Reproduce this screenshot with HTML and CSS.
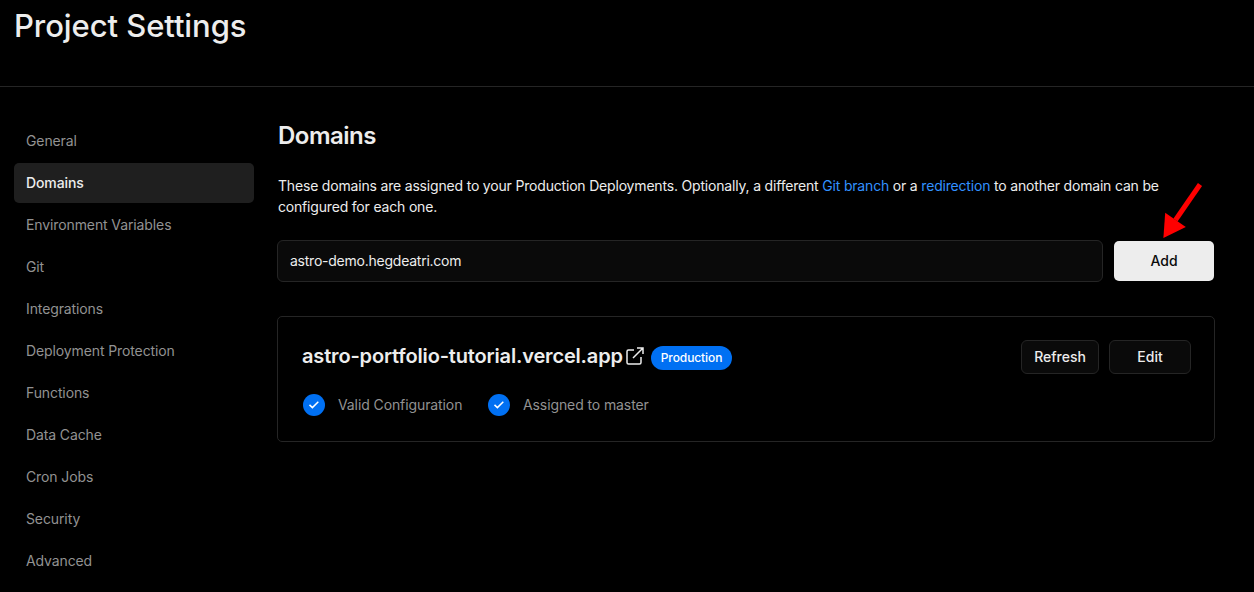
FILE: index.html
```html
<!DOCTYPE html>
<html lang="en">
<head>
<meta charset="utf-8">
<title>Project Settings</title>
<link rel="stylesheet" href="styles.css">
</head>
<body>
<header class="page-header"><h1 class="page-title">Project Settings</h1></header>
<div class="layout">
  <nav class="sidebar">
    <a class="nav-item">General</a>
    <a class="nav-item active">Domains</a>
    <a class="nav-item">Environment Variables</a>
    <a class="nav-item">Git</a>
    <a class="nav-item">Integrations</a>
    <a class="nav-item">Deployment Protection</a>
    <a class="nav-item">Functions</a>
    <a class="nav-item">Data Cache</a>
    <a class="nav-item">Cron Jobs</a>
    <a class="nav-item">Security</a>
    <a class="nav-item">Advanced</a>
  </nav>
  <main class="content">
    <h2 class="section-title">Domains</h2>
    <p class="description">These domains are assigned to your Production Deployments. Optionally, a different <a class="link">Git branch</a> or a <a class="link">redirection</a> to another domain can be<br>configured for each one.</p>
    <div class="add-row">
      <input class="domain-input" type="text" value="astro-demo.hegdeatri.com" aria-label="Domain">
      <button class="btn-add">Add
        <svg class="pointer-arrow" width="44" height="60" viewBox="0 0 44 60"><path d="M40 4.500 15.500 40" stroke="#f00" stroke-width="5" fill="none"/><path d="M3.400 58 5.200 32.800 25.800 47Z" fill="#f00"/></svg>
      </button>
    </div>
    <section class="card">
      <div class="card-top">
        <div class="domain">
          <span class="domain-name">astro-portfolio-tutorial.vercel.app</span>
          <svg class="external" width="18" height="18" viewBox="0 0 18 18" fill="none" stroke="#ededed" stroke-width="1.5"><path d="M8 3H2.500Q1 3 1 4.500V15.500Q1 17 2.500 17H13.500Q15 17 15 15.500V10M11 1H17V7M17 1 7 11"/></svg>
          <span class="badge">Production</span>
        </div>
        <div class="actions"><button class="btn btn-refresh">Refresh</button><button class="btn btn-edit">Edit</button></div>
      </div>
      <div class="statuses">
        <span class="status"><svg width="22" height="22" viewBox="0 0 22 22"><circle cx="11" cy="11" r="11" fill="#0070f3"/><path d="m6.500 10.900 2.900 2.700 5.900-5.800" fill="none" stroke="#fff" stroke-width="1.5"/></svg><span class="status-text valid">Valid Configuration</span></span>
        <span class="status"><svg width="22" height="22" viewBox="0 0 22 22"><circle cx="11" cy="11" r="11" fill="#0070f3"/><path d="m6.500 10.900 2.900 2.700 5.900-5.800" fill="none" stroke="#fff" stroke-width="1.5"/></svg><span class="status-text">Assigned to master</span></span>
      </div>
    </section>
  </main>
</div>
</body>
</html>
```
FILE: styles.css
```css
* { box-sizing: border-box; }
body { margin: 0; height: 592px; overflow: hidden; background: #000; color: #ededed; font: 14px/20px Inter, "Liberation Sans", sans-serif; }
h1, h2, p { margin: 0; }
button, input { font: inherit; }
.page-header { height: 87px; padding: 6px 14px; border-bottom: 1px solid #252525; }
.page-title { font-size: 31px; line-height: 40px; font-weight: 500; letter-spacing: -0.07px; white-space: nowrap; }
.layout { display: flex; gap: 23px; padding: 34px 39px 0 14px; }
.sidebar { width: 240px; flex: none; display: flex; flex-direction: column; gap: 2px; }
.nav-item { height: 40px; padding: 10px 12px; border-radius: 5px; color: #929292; letter-spacing: -0.11px; }
.nav-item.active { background: #1f1f1f; color: #ededed; font-weight: 500; }
.content { flex: 1; }
.section-title { padding: 0 1px; font-size: 24px; line-height: 30px; font-weight: 600; letter-spacing: -0.5px; }
.description { margin-top: 24px; padding-left: 1px; line-height: 21px; letter-spacing: -0.184px; white-space: nowrap; }
.link { color: #3291ff; }
.add-row { display: flex; align-items: center; gap: 11px; margin-top: 23px; padding-right: 1px; }
.domain-input { flex: 1; min-width: 0; height: 42px; padding: 0 12px 2px; border: 1px solid #252525; border-radius: 6px; background: #0a0a0a; color: #ededed; outline: none; letter-spacing: -0.24px; }
.btn-add { position: relative; width: 100px; height: 40px; padding: 0; border: 0; border-radius: 5px; background: #ededed; color: #0a0a0a; font-weight: 500; }
.pointer-arrow { position: absolute; left: 46px; top: -61px; }
.card { margin-top: 34px; height: 126px; padding: 23px; border: 1px solid #252525; border-radius: 5px; }
.card-top { display: flex; justify-content: space-between; align-items: flex-start; padding-left: 1px; }
.domain { display: flex; align-items: flex-start; }
.domain-name { width: 324px; font-size: 20px; line-height: 32px; font-weight: 600; letter-spacing: -0.16px; white-space: nowrap; }
.external { margin-top: 7px; }
.badge { width: 81px; height: 24px; margin: 6px 0 0 7px; border-radius: 12px; background: #0070f3; color: #fff; font-size: 12px; line-height: 24px; font-weight: 500; letter-spacing: -0.1px; text-align: center; }
.actions { display: flex; gap: 10px; }
.btn { height: 34px; padding: 0; border: 1px solid #252525; border-radius: 6px; background: #0a0a0a; color: #ededed; font-weight: 500; }
.btn-refresh { width: 78px; }
.btn-edit { width: 82px; }
.statuses { display: flex; gap: 25px; margin: 20px 0 0 2px; }
.status { display: flex; align-items: center; gap: 13px; color: #929292; }
.status-text { letter-spacing: -0.1px; white-space: nowrap; }
.valid { width: 125px; }
```
